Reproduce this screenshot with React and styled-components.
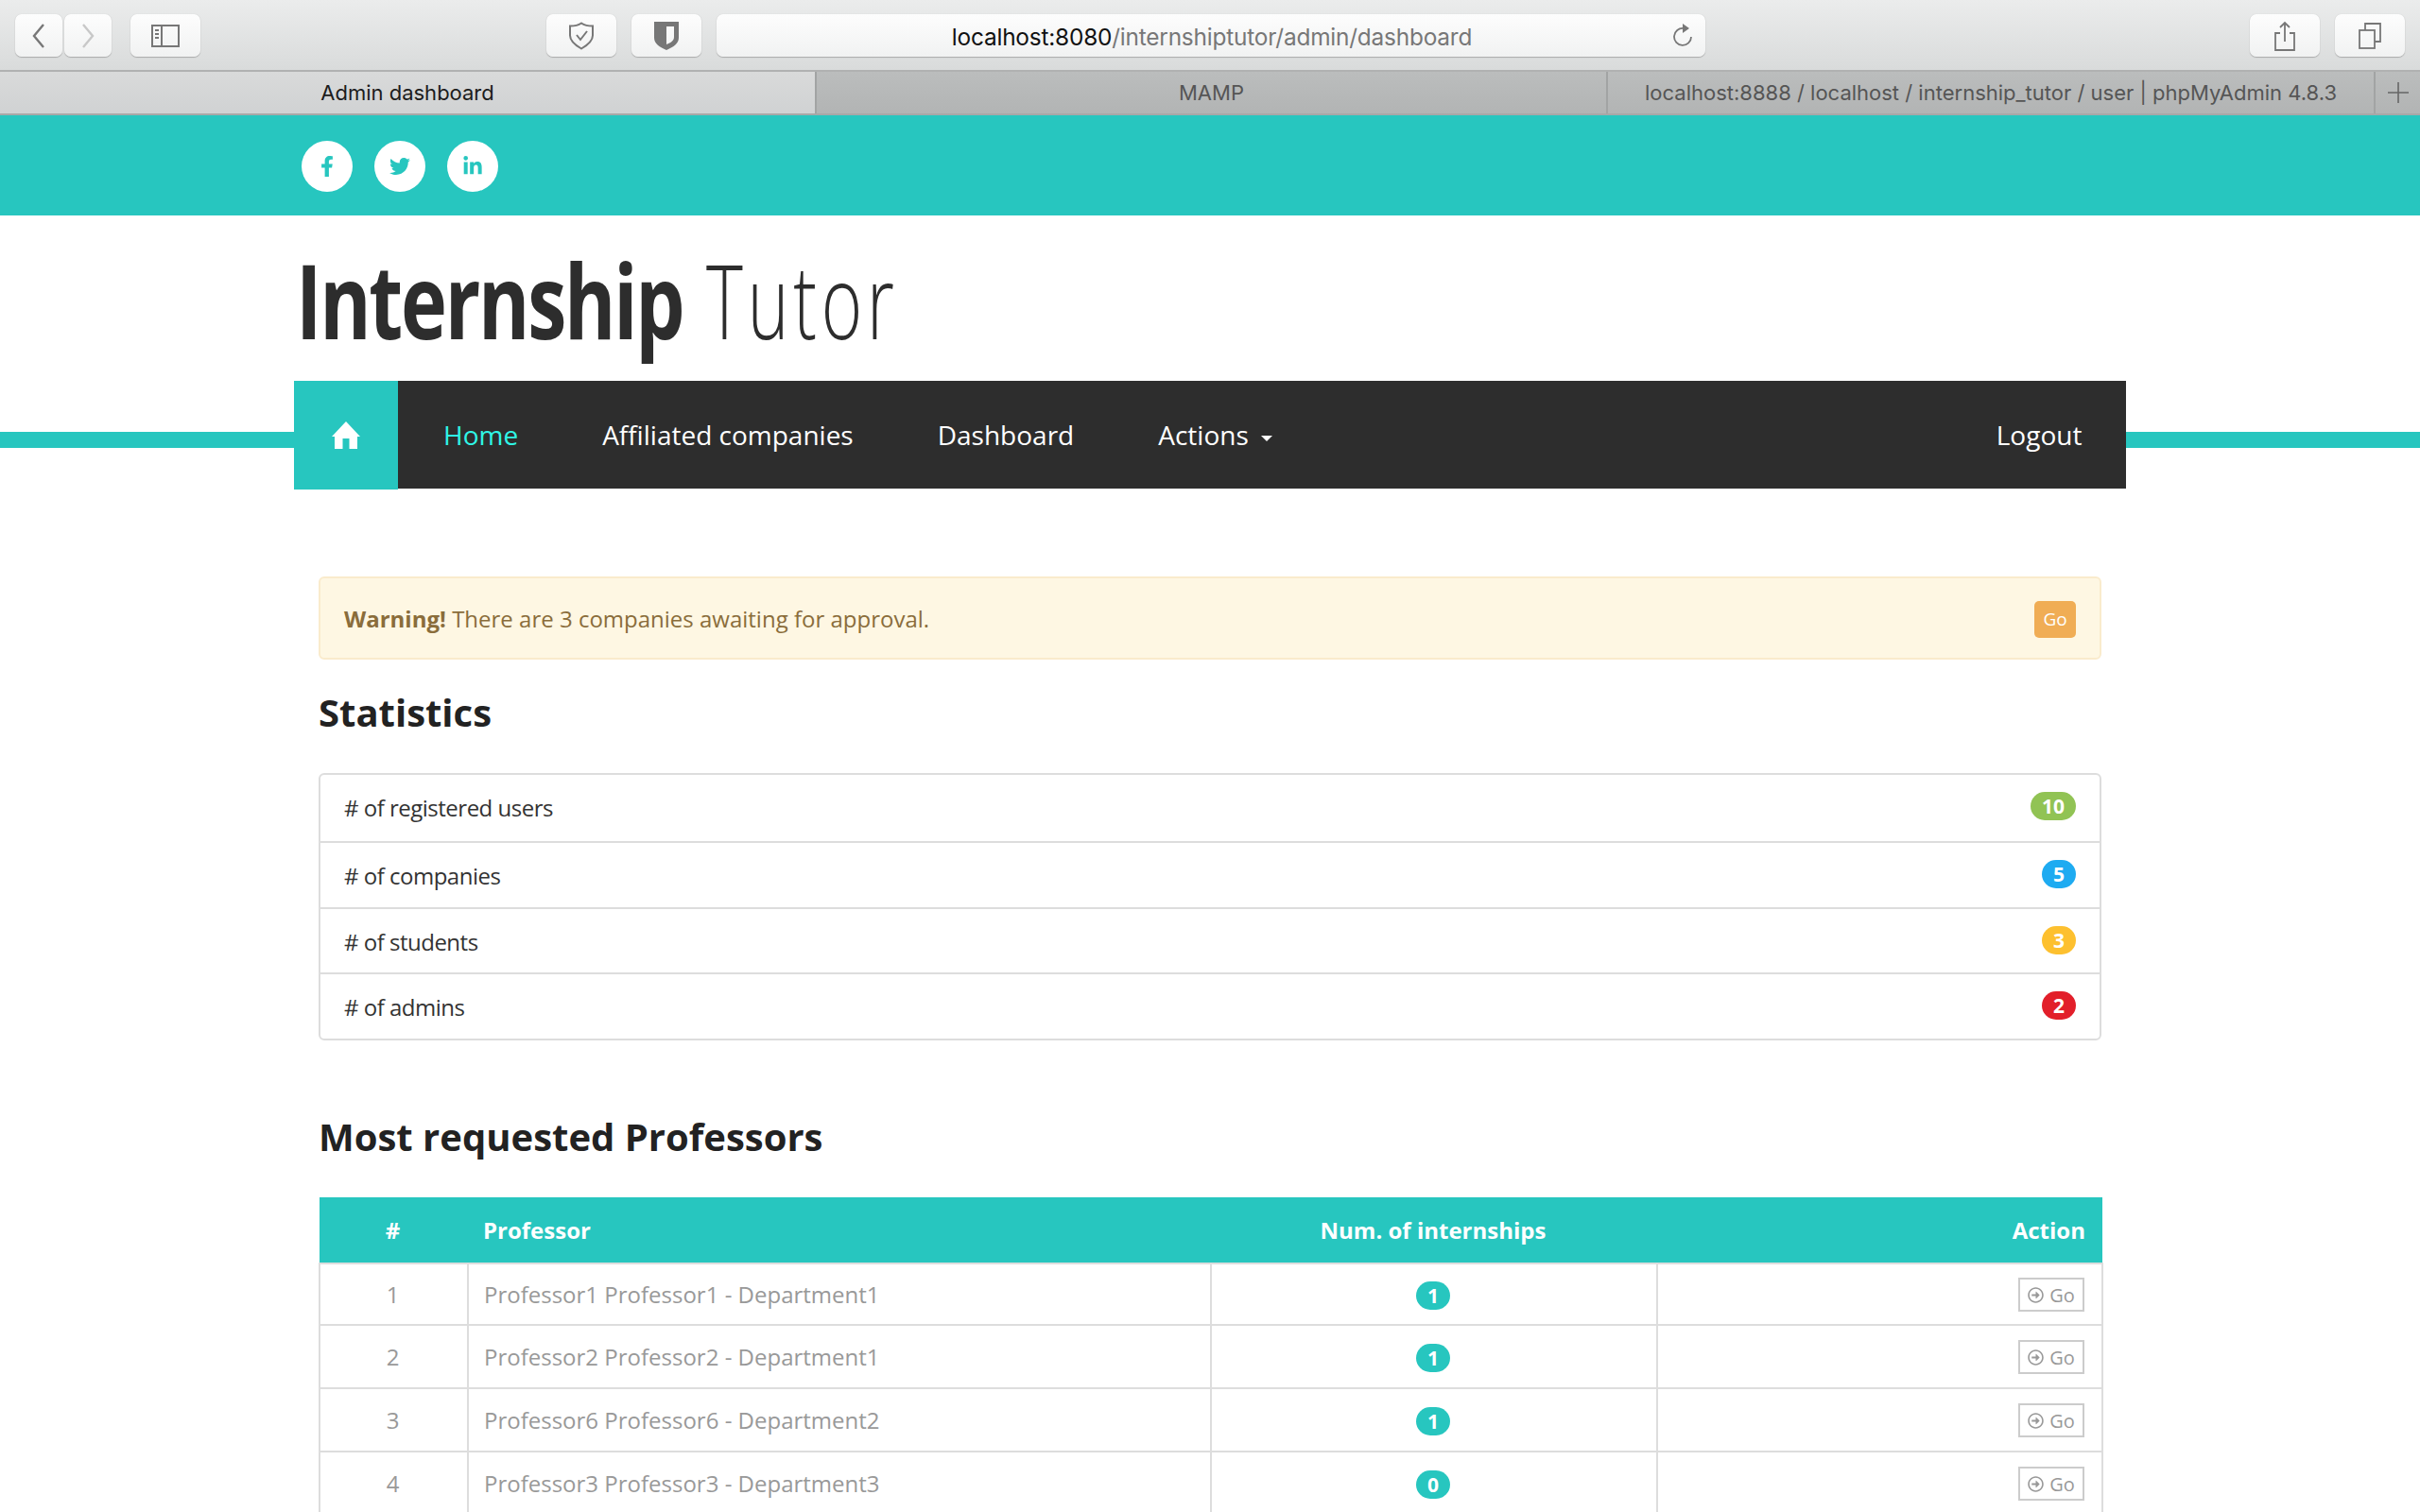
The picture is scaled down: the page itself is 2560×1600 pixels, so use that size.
import React from 'react';
import styled, { createGlobalStyle } from 'styled-components';
import { FaFacebookF, FaTwitter, FaLinkedinIn, FaRegArrowAltCircleRight } from 'react-icons/fa';

const teal = '#27c6bf';

const GlobalStyle = createGlobalStyle`
  html, body {
    margin: 0;
    height: 1600px;
    overflow: hidden;
    background: #fff;
    font-family: "Open Sans", "Liberation Sans", sans-serif;
  }
  * { box-sizing: border-box; }
`;

const Toolbar = styled.div`
  display: flex;
  align-items: flex-start;
  height: 76px;
  padding: 15px 16px 0;
  background: linear-gradient(#ebecec, #d9dbdb);
  border-bottom: 2px solid #b0b1b1;
`;

const ToolButton = styled.div`
  display: flex;
  align-items: center;
  justify-content: center;
  flex: none;
  width: ${(p) => p.$w}px;
  height: 45px;
  margin-left: ${(p) => p.$gap || 0}px;
  background: linear-gradient(#fdfdfd, #f1f2f2);
  border-radius: 7px;
  box-shadow: 0 1px 1px #a9aaaa, 0 0 1px #bdbebe;
`;

const UrlBar = styled(ToolButton)`
  position: relative;
  width: 1046px;
  margin-left: 16px;
  padding: 2px 0 0 2px;
  font-family: Inter, Roboto, sans-serif;
  font-size: 24.4px;
  color: #777;
  letter-spacing: -0.2px;
  b { font-weight: 400; color: #111; }
`;

const Reload = styled.svg`
  position: absolute;
  right: 12px;
  top: 8px;
`;

const TabBar = styled.div`
  display: flex;
  height: 46px;
  border-bottom: 2px solid #a7a8a8;
  font-family: Inter, Roboto, sans-serif;
  font-size: 22px;
`;

const Tab = styled.div`
  display: flex;
  align-items: center;
  justify-content: center;
  width: ${(p) => p.$w}px;
  flex: none;
  color: ${(p) => (p.$active ? '#1c1c1c' : '#555')};
  background: ${(p) => (p.$active ? 'linear-gradient(#d9dada, #d0d2d3)' : 'linear-gradient(#bbbdbd, #b2b4b4)')};
  border-right: 2px solid #a2a4a4;
`;

const AddTab = styled(Tab)`
  flex: 1;
  border-right: 0;
`;

const SocialBand = styled.div`
  display: flex;
  align-items: center;
  gap: 23px;
  height: 106px;
  padding: 2px 0 0 319px;
  background: ${teal};
`;

const SocialLink = styled.a`
  display: flex;
  align-items: center;
  justify-content: center;
  width: 54px;
  height: 54px;
  border-radius: 50%;
  background: #fff;
  color: ${teal};
  font-size: 22px;
`;

const Brand = styled.div`
  display: flex;
  align-items: baseline;
  height: 175px;
  padding: 24px 0 0 313px;
  color: #2d2d2d;
  font-size: 109px;
  line-height: 130px;
  white-space: nowrap;
`;

const BrandBold = styled.span`
  display: inline-block;
  width: 434px;
  font-weight: 700;
  letter-spacing: -3px;
  transform: scaleX(0.76);
  transform-origin: left;
`;

const BrandLight = styled.span`
  display: inline-block;
  font-weight: 300;
  letter-spacing: 7px;
  transform: scaleX(0.68);
  transform-origin: left;
`;

const NavBand = styled.div`
  display: flex;
  align-items: flex-start;
`;

const NavRule = styled.div`
  flex: 1;
  height: 17px;
  margin-top: 54px;
  background: ${teal};
`;

const Nav = styled.nav`
  display: flex;
  align-items: center;
  width: 1938px;
  height: 114px;
  background: #2d2d2d;
  font-size: 28px;
  color: #fff;
`;

const HomeTile = styled.a`
  display: flex;
  align-items: center;
  justify-content: center;
  flex: none;
  align-self: flex-start;
  width: 110px;
  height: 115px;
  padding-bottom: 1px;
  background: ${teal};
`;

const NavLink = styled.a`
  margin-left: ${(p) => p.$gap}px;
  color: ${(p) => (p.$active ? '#2ff5e6' : '#fff')};
  white-space: nowrap;
`;

const Caret = styled.span`
  display: inline-block;
  margin-left: 13px;
  vertical-align: middle;
  border-top: 6px solid #fff;
  border-left: 6px solid transparent;
  border-right: 6px solid transparent;
`;

const Content = styled.main`
  width: 1886px;
  margin: 93px 0 0 337px;
`;

const Alert = styled.div`
  display: flex;
  align-items: center;
  justify-content: space-between;
  height: 88px;
  padding: 0 25px;
  background: #fef7e3;
  border: 2px solid #faebcc;
  border-radius: 6px;
  color: #8a6d3b;
  font-size: 24px;
`;

const AlertButton = styled.a`
  display: flex;
  align-items: center;
  justify-content: center;
  width: 44px;
  height: 39px;
  margin-top: 2px;
  border-radius: 5px;
  background: #f0ad55;
  color: #fff;
  font-size: 19px;
`;

const Heading = styled.h2`
  margin: ${(p) => p.$top}px 0 ${(p) => p.$bottom}px;
  color: #222;
  font-size: 40px;
  line-height: 56px;
  font-weight: 700;
`;

const StatList = styled.ul`
  margin: 0;
  padding: 0;
  list-style: none;
  border: 2px solid #ddd;
  border-radius: 6px;
`;

const StatRow = styled.li`
  display: flex;
  align-items: flex-start;
  justify-content: space-between;
  height: 69.75px;
  padding: 17px 25px 0 25px;
  color: #333;
  font-size: 24px;
  letter-spacing: -0.5px;
  line-height: 36px;
  border-top: ${(p) => (p.$first ? '0' : '2px solid #ddd')};
`;

const Badge = styled.span`
  display: inline-block;
  min-width: 35px;
  height: 30px;
  margin-top: ${(p) => p.$top || 0}px;
  padding: 0 12px;
  border-radius: 15px;
  background: ${(p) => p.$color};
  color: #fff;
  font-size: 21px;
  font-weight: 700;
  letter-spacing: 0;
  line-height: 30px;
  text-align: center;
`;

const Table = styled.table`
  width: 100%;
  table-layout: fixed;
  border-collapse: collapse;
  font-size: 24px;
  tbody tr:first-child td { height: 65px; }
`;

const HeadCell = styled.th`
  height: 70px;
  padding: 0 18px 0 16px;
  background: ${teal};
  color: #fff;
  font-weight: 700;
  font-size: 24px;
  text-align: ${(p) => p.$align || 'left'};
`;

const Cell = styled.td`
  height: 67px;
  padding: 0 18px 0 16px;
  border: 2px solid #ddd;
  color: #999;
  text-align: ${(p) => p.$align || 'left'};
`;

const GoButton = styled.a`
  display: inline-flex;
  align-items: center;
  justify-content: center;
  gap: 6px;
  width: 70px;
  height: 36px;
  border: 2px solid #ccc;
  color: #999;
  font-size: 20px;
  vertical-align: middle;
  svg { font-size: 17px; }
`;

const stats = [
  { label: '# of registered users', value: 10, color: '#91c354' },
  { label: '# of companies', value: 5, color: '#1eabf1' },
  { label: '# of students', value: 3, color: '#fdc02f' },
  { label: '# of admins', value: 2, color: '#e21f2a' },
];

const professors = [
  { name: 'Professor1 Professor1 - Department1', count: 1 },
  { name: 'Professor2 Professor2 - Department1', count: 1 },
  { name: 'Professor6 Professor6 - Department2', count: 1 },
  { name: 'Professor3 Professor3 - Department3', count: 0 },
];

export default function App() {
  return (
    <>
      <GlobalStyle />
      <Toolbar>
        <ToolButton $w={50}>
          <svg width="16" height="28" viewBox="0 0 16 28" fill="none" stroke="#777" strokeWidth="2.4"><path d="M13 2 3 14l10 12" /></svg>
        </ToolButton>
        <ToolButton $w={50} $gap={2}>
          <svg width="16" height="28" viewBox="0 0 16 28" fill="none" stroke="#c8c8c8" strokeWidth="2.4"><path d="m3 2 10 12L3 26" /></svg>
        </ToolButton>
        <ToolButton $w={74} $gap={20}>
          <svg width="30" height="24" viewBox="0 0 30 24" fill="none" stroke="#777" strokeWidth="2"><rect x="1" y="1" width="28" height="22" /><path d="M11 1v22" /><path d="M4 6h4M4 10h4M4 14h4" strokeWidth="2" /></svg>
        </ToolButton>
        <ToolButton $w={74} $gap={366}>
          <svg width="28" height="30" viewBox="0 0 28 30" fill="none" stroke="#777" strokeWidth="2"><path d="M14 1.5c3 2 7 3 12 3v10c0 6-5 10-12 14-7-4-12-8-12-14v-10c5 0 9-1 12-3Z" /><path d="m9 14 4 5 7-9" /></svg>
        </ToolButton>
        <ToolButton $w={74} $gap={16}>
          <svg width="26" height="32" viewBox="0 0 26 32"><path fill="#777" fillRule="evenodd" d="M0 1h26v17c0 6-6 10-13 13C6 28 0 24 0 18Zm13 5v19c5-2 8-4 8-8V6Z" /></svg>
        </ToolButton>
        <UrlBar $w={1046}>
          <span><b>localhost:8080</b>/internshiptutor/admin/dashboard</span>
          <Reload width="24" height="30" viewBox="0 0 24 30" fill="none" stroke="#777" strokeWidth="1.8">
            <path d="M13 7a9 9 0 1 0 8 9" />
            <path d="M12 2v10l7-5Z" fill="#777" stroke="none" />
          </Reload>
        </UrlBar>
        <ToolButton $w={74} $gap={576}>
          <svg width="24" height="32" viewBox="0 0 24 32" fill="none" stroke="#777" strokeWidth="1.8"><path d="M7 13H2v18h20V13h-5" /><path d="M12 22V2M7 7l5-5 5 5" /></svg>
        </ToolButton>
        <ToolButton $w={74} $gap={16}>
          <svg width="24" height="28" viewBox="0 0 24 28" fill="none" stroke="#777" strokeWidth="1.8"><rect x="1" y="8" width="16" height="19" /><path d="M7 8V1h16v19h-6" /></svg>
        </ToolButton>
      </Toolbar>
      <TabBar>
        <Tab $w={864} $active>Admin dashboard</Tab>
        <Tab $w={837}>MAMP</Tab>
        <Tab $w={812}>localhost:8888 / localhost / internship_tutor / user | phpMyAdmin 4.8.3</Tab>
        <AddTab>
          <svg width="22" height="22" viewBox="0 0 22 22" stroke="#666" strokeWidth="1.6"><path d="M11 0v22M0 11h22" /></svg>
        </AddTab>
      </TabBar>
      <SocialBand>
        <SocialLink><FaFacebookF /></SocialLink>
        <SocialLink><FaTwitter /></SocialLink>
        <SocialLink><FaLinkedinIn /></SocialLink>
      </SocialBand>
      <Brand>
        <BrandBold>Internship</BrandBold>
        <BrandLight>Tutor</BrandLight>
      </Brand>
      <NavBand>
        <NavRule />
        <Nav>
          <HomeTile>
            <svg width="30" height="29" viewBox="0 0 30 29"><path fill="#fff" d="M15 0 30 16h-3v13h-8.500V18h-7v11H3V16H0Z" /></svg>
          </HomeTile>
          <NavLink $active $gap={48}>Home</NavLink>
          <NavLink $gap={89}>Affiliated companies</NavLink>
          <NavLink $gap={89}>Dashboard</NavLink>
          <NavLink $gap={89}>Actions<Caret /></NavLink>
          <NavLink $gap={766}>Logout</NavLink>
        </Nav>
        <NavRule />
      </NavBand>
      <Content>
        <Alert>
          <span><strong>Warning!</strong> There are 3 companies awaiting for approval.</span>
          <AlertButton>Go</AlertButton>
        </Alert>
        <Heading $top={28} $bottom={36}>Statistics</Heading>
        <StatList>
          {stats.map((s, i) => (
            <StatRow key={s.label} $first={i === 0}>
              {s.label}
              <Badge $color={s.color} $top={1}>{s.value}</Badge>
            </StatRow>
          ))}
        </StatList>
        <Heading $top={74} $bottom={36}>Most requested Professors</Heading>
        <Table>
          <colgroup>
            <col width="157" />
            <col width="786" />
            <col width="472" />
            <col width="471" />
          </colgroup>
          <thead>
            <tr>
              <HeadCell $align="center">#</HeadCell>
              <HeadCell>Professor</HeadCell>
              <HeadCell $align="center">Num. of internships</HeadCell>
              <HeadCell $align="right">Action</HeadCell>
            </tr>
          </thead>
          <tbody>
            {professors.map((p, i) => (
              <tr key={p.name}>
                <Cell $align="center">{i + 1}</Cell>
                <Cell>{p.name}</Cell>
                <Cell $align="center"><Badge $color={teal}>{p.count}</Badge></Cell>
                <Cell $align="right"><GoButton><FaRegArrowAltCircleRight />Go</GoButton></Cell>
              </tr>
            ))}
          </tbody>
        </Table>
      </Content>
    </>
  );
}
